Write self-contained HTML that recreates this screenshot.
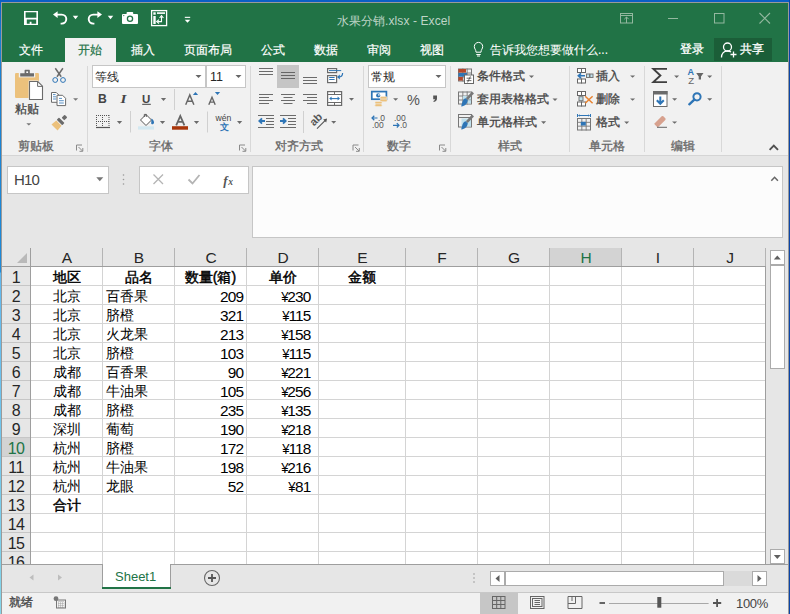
<!DOCTYPE html>
<html><head><meta charset="utf-8"><style>
html,body{margin:0;padding:0;width:790px;height:614px;overflow:hidden;position:relative;font-family:"Liberation Sans",sans-serif}
body>div{position:absolute}
.t{white-space:nowrap}
.s{-webkit-text-stroke:0.3px currentColor}
</style></head><body>
<div style="left:0px;top:0px;width:790px;height:614px;background:#e6e6e6"></div><div style="left:0px;top:0px;width:790px;height:62px;background:#217346"></div><div style="left:0px;top:62px;width:790px;height:93px;background:#f1f1f1"></div><div style="left:0px;top:155px;width:790px;height:1px;background:#d5d5d5"></div><div style="left:65px;top:38px;width:51px;height:24px;background:#f1f1f1"></div><div style="left:714px;top:38px;width:58px;height:23px;background:#1b5e38"></div><div class="t s" style="left:19px;top:44px;font-size:12px;line-height:12px;color:#fff;-webkit-text-stroke:0.2px #fff">文件</div><div class="t s" style="left:78px;top:44px;font-size:12px;line-height:12px;color:#217346;-webkit-text-stroke:0.2px #217346">开始</div><div class="t s" style="left:131px;top:44px;font-size:12px;line-height:12px;color:#fff;-webkit-text-stroke:0.2px #fff">插入</div><div class="t s" style="left:184px;top:44px;font-size:12px;line-height:12px;color:#fff;-webkit-text-stroke:0.2px #fff">页面布局</div><div class="t s" style="left:261px;top:44px;font-size:12px;line-height:12px;color:#fff;-webkit-text-stroke:0.2px #fff">公式</div><div class="t s" style="left:314px;top:44px;font-size:12px;line-height:12px;color:#fff;-webkit-text-stroke:0.2px #fff">数据</div><div class="t s" style="left:367px;top:44px;font-size:12px;line-height:12px;color:#fff;-webkit-text-stroke:0.2px #fff">审阅</div><div class="t s" style="left:420px;top:44px;font-size:12px;line-height:12px;color:#fff;-webkit-text-stroke:0.2px #fff">视图</div><div class="t s" style="left:337px;top:15px;font-size:12px;line-height:12px;color:#bfd5c7;-webkit-text-stroke:0">水果分销<span style='letter-spacing:0.1px'>.xlsx - Excel</span></div><div class="t s" style="left:490px;top:44px;font-size:12px;line-height:12px;color:#fff;-webkit-text-stroke:0.05px #fff">告诉我您想要做什么...</div><div class="t s" style="left:680px;top:43px;font-size:12px;line-height:12px;color:#fff;">登录</div><div class="t s" style="left:740px;top:43px;font-size:12px;line-height:12px;color:#fff;">共享</div><div class="t s" style="left:15px;top:103px;font-size:12px;line-height:12px;color:#444;">粘贴</div><div class="t s" style="left:18px;top:140px;font-size:12px;line-height:12px;color:#666;">剪贴板</div><div class="t s" style="left:149px;top:140px;font-size:12px;line-height:12px;color:#666;">字体</div><div class="t s" style="left:275px;top:140px;font-size:12px;line-height:12px;color:#666;">对齐方式</div><div class="t s" style="left:387px;top:140px;font-size:12px;line-height:12px;color:#666;">数字</div><div class="t s" style="left:498px;top:140px;font-size:12px;line-height:12px;color:#666;">样式</div><div class="t s" style="left:589px;top:140px;font-size:12px;line-height:12px;color:#666;">单元格</div><div class="t s" style="left:671px;top:140px;font-size:12px;line-height:12px;color:#666;">编辑</div><div style="left:92px;top:65px;width:114px;height:23px;background:#fff;border:1px solid #c6c6c6;box-sizing:border-box"></div><div style="left:206px;top:65px;width:40px;height:23px;background:#fff;border:1px solid #c6c6c6;box-sizing:border-box"></div><div class="t s" style="left:95px;top:71px;font-size:12px;line-height:12px;color:#262626;-webkit-text-stroke:0">等线</div><div class="t" style="left:210px;top:71px;font-size:12.5px;line-height:12.5px;color:#262626;">11</div><div style="left:368px;top:65px;width:78px;height:23px;background:#fff;border:1px solid #c6c6c6;box-sizing:border-box"></div><div class="t s" style="left:371px;top:71px;font-size:12px;line-height:12px;color:#262626;-webkit-text-stroke:0">常规</div><div style="left:277px;top:65px;width:22px;height:23px;background:#c5c5c5"></div><div class="t s" style="left:477px;top:70px;font-size:12px;line-height:12px;color:#444;">条件格式</div><div class="t s" style="left:477px;top:93px;font-size:12px;line-height:12px;color:#444;">套用表格格式</div><div class="t s" style="left:477px;top:116px;font-size:12px;line-height:12px;color:#444;">单元格样式</div><div class="t s" style="left:596px;top:70px;font-size:12px;line-height:12px;color:#444;">插入</div><div class="t s" style="left:596px;top:93px;font-size:12px;line-height:12px;color:#444;">删除</div><div class="t s" style="left:596px;top:116px;font-size:12px;line-height:12px;color:#444;">格式</div><div style="left:7px;top:166px;width:102px;height:28px;background:#fff;border:1px solid #c6c6c6;box-sizing:border-box"></div><div style="left:139px;top:166px;width:110px;height:28px;background:#fff;border:1px solid #c6c6c6;box-sizing:border-box"></div><div style="left:252px;top:166px;width:531px;height:72px;background:#fcfcfc;border:1px solid #c6c6c6;box-sizing:border-box"></div><div class="t" style="left:14px;top:172px;font-size:15px;line-height:15px;color:#444;letter-spacing:-0.8px">H10</div><div style="left:2px;top:248px;width:764px;height:18px;background:#e6e6e6"></div><div style="left:550px;top:248px;width:71px;height:18px;background:#d3d3d3"></div><div style="left:2px;top:437px;width:28px;height:19px;background:#d3d3d3"></div><div style="left:31px;top:267px;width:735px;height:297px;background:#fff"></div><div class="t" style="left:-83.0px;width:300px;text-align:center;top:250.2px;font-size:15.5px;line-height:15.5px;color:#262626;">A</div><div class="t" style="left:-11.0px;width:300px;text-align:center;top:250.2px;font-size:15.5px;line-height:15.5px;color:#262626;">B</div><div class="t" style="left:61.0px;width:300px;text-align:center;top:250.2px;font-size:15.5px;line-height:15.5px;color:#262626;">C</div><div class="t" style="left:133.0px;width:300px;text-align:center;top:250.2px;font-size:15.5px;line-height:15.5px;color:#262626;">D</div><div class="t" style="left:212.5px;width:300px;text-align:center;top:250.2px;font-size:15.5px;line-height:15.5px;color:#262626;">E</div><div class="t" style="left:292.0px;width:300px;text-align:center;top:250.2px;font-size:15.5px;line-height:15.5px;color:#262626;">F</div><div class="t" style="left:364.0px;width:300px;text-align:center;top:250.2px;font-size:15.5px;line-height:15.5px;color:#262626;">G</div><div class="t" style="left:436.0px;width:300px;text-align:center;top:250.2px;font-size:15.5px;line-height:15.5px;color:#217346;">H</div><div class="t" style="left:508.0px;width:300px;text-align:center;top:250.2px;font-size:15.5px;line-height:15.5px;color:#262626;">I</div><div class="t" style="left:580.0px;width:300px;text-align:center;top:250.2px;font-size:15.5px;line-height:15.5px;color:#262626;">J</div><div class="t" style="left:-134px;width:300px;text-align:center;top:269.6px;font-size:16px;line-height:16px;color:#262626;letter-spacing:-0.6px">1</div><div class="t" style="left:-134px;width:300px;text-align:center;top:288.6px;font-size:16px;line-height:16px;color:#262626;letter-spacing:-0.6px">2</div><div class="t" style="left:-134px;width:300px;text-align:center;top:307.6px;font-size:16px;line-height:16px;color:#262626;letter-spacing:-0.6px">3</div><div class="t" style="left:-134px;width:300px;text-align:center;top:326.6px;font-size:16px;line-height:16px;color:#262626;letter-spacing:-0.6px">4</div><div class="t" style="left:-134px;width:300px;text-align:center;top:345.6px;font-size:16px;line-height:16px;color:#262626;letter-spacing:-0.6px">5</div><div class="t" style="left:-134px;width:300px;text-align:center;top:364.6px;font-size:16px;line-height:16px;color:#262626;letter-spacing:-0.6px">6</div><div class="t" style="left:-134px;width:300px;text-align:center;top:383.6px;font-size:16px;line-height:16px;color:#262626;letter-spacing:-0.6px">7</div><div class="t" style="left:-134px;width:300px;text-align:center;top:402.6px;font-size:16px;line-height:16px;color:#262626;letter-spacing:-0.6px">8</div><div class="t" style="left:-134px;width:300px;text-align:center;top:421.6px;font-size:16px;line-height:16px;color:#262626;letter-spacing:-0.6px">9</div><div class="t" style="left:-134px;width:300px;text-align:center;top:440.6px;font-size:16px;line-height:16px;color:#217346;letter-spacing:-0.6px">10</div><div class="t" style="left:-134px;width:300px;text-align:center;top:459.6px;font-size:16px;line-height:16px;color:#262626;letter-spacing:-0.6px">11</div><div class="t" style="left:-134px;width:300px;text-align:center;top:478.6px;font-size:16px;line-height:16px;color:#262626;letter-spacing:-0.6px">12</div><div class="t" style="left:-134px;width:300px;text-align:center;top:497.6px;font-size:16px;line-height:16px;color:#262626;letter-spacing:-0.6px">13</div><div class="t" style="left:-134px;width:300px;text-align:center;top:516.6px;font-size:16px;line-height:16px;color:#262626;letter-spacing:-0.6px">14</div><div class="t" style="left:-134px;width:300px;text-align:center;top:535.6px;font-size:16px;line-height:16px;color:#262626;letter-spacing:-0.6px">15</div><div class="t" style="left:-134px;width:300px;text-align:center;top:554.6px;font-size:16px;line-height:16px;color:#262626;letter-spacing:-0.6px">16</div><div class="t" style="left:-83.5px;width:300px;text-align:center;top:269.5px;font-size:14px;line-height:14px;color:#000;-webkit-text-stroke:0.45px #000">地区</div><div class="t" style="left:-11.5px;width:300px;text-align:center;top:269.5px;font-size:14px;line-height:14px;color:#000;-webkit-text-stroke:0.45px #000">品名</div><div class="t" style="left:60.5px;width:300px;text-align:center;top:269.5px;font-size:14px;line-height:14px;color:#000;-webkit-text-stroke:0.45px #000">数量(箱)</div><div class="t" style="left:132.5px;width:300px;text-align:center;top:269.5px;font-size:14px;line-height:14px;color:#000;-webkit-text-stroke:0.45px #000">单价</div><div class="t" style="left:212.0px;width:300px;text-align:center;top:269.5px;font-size:14px;line-height:14px;color:#000;-webkit-text-stroke:0.45px #000">金额</div><div class="t" style="left:-83.5px;width:300px;text-align:center;top:288.5px;font-size:14px;line-height:14px;color:#000;">北京</div><div class="t" style="left:106px;top:288.5px;font-size:14px;line-height:14px;color:#000;">百香果</div><div class="t" style="left:-56.69999999999999px;width:300px;text-align:right;top:288.6px;font-size:15.4px;line-height:15.4px;color:#000;letter-spacing:-0.75px">209</div><div class="t" style="left:10.699999999999989px;width:300px;text-align:right;top:288.6px;font-size:15.4px;line-height:15.4px;color:#000;letter-spacing:-0.75px"><span style='display:inline-block;transform:scaleX(0.85);transform-origin:right;margin-right:-0.2px'>¥</span>230</div><div class="t" style="left:-83.5px;width:300px;text-align:center;top:307.5px;font-size:14px;line-height:14px;color:#000;">北京</div><div class="t" style="left:106px;top:307.5px;font-size:14px;line-height:14px;color:#000;">脐橙</div><div class="t" style="left:-56.69999999999999px;width:300px;text-align:right;top:307.6px;font-size:15.4px;line-height:15.4px;color:#000;letter-spacing:-0.75px">321</div><div class="t" style="left:10.699999999999989px;width:300px;text-align:right;top:307.6px;font-size:15.4px;line-height:15.4px;color:#000;letter-spacing:-0.75px"><span style='display:inline-block;transform:scaleX(0.85);transform-origin:right;margin-right:-0.2px'>¥</span>115</div><div class="t" style="left:-83.5px;width:300px;text-align:center;top:326.5px;font-size:14px;line-height:14px;color:#000;">北京</div><div class="t" style="left:106px;top:326.5px;font-size:14px;line-height:14px;color:#000;">火龙果</div><div class="t" style="left:-56.69999999999999px;width:300px;text-align:right;top:326.6px;font-size:15.4px;line-height:15.4px;color:#000;letter-spacing:-0.75px">213</div><div class="t" style="left:10.699999999999989px;width:300px;text-align:right;top:326.6px;font-size:15.4px;line-height:15.4px;color:#000;letter-spacing:-0.75px"><span style='display:inline-block;transform:scaleX(0.85);transform-origin:right;margin-right:-0.2px'>¥</span>158</div><div class="t" style="left:-83.5px;width:300px;text-align:center;top:345.5px;font-size:14px;line-height:14px;color:#000;">北京</div><div class="t" style="left:106px;top:345.5px;font-size:14px;line-height:14px;color:#000;">脐橙</div><div class="t" style="left:-56.69999999999999px;width:300px;text-align:right;top:345.6px;font-size:15.4px;line-height:15.4px;color:#000;letter-spacing:-0.75px">103</div><div class="t" style="left:10.699999999999989px;width:300px;text-align:right;top:345.6px;font-size:15.4px;line-height:15.4px;color:#000;letter-spacing:-0.75px"><span style='display:inline-block;transform:scaleX(0.85);transform-origin:right;margin-right:-0.2px'>¥</span>115</div><div class="t" style="left:-83.5px;width:300px;text-align:center;top:364.5px;font-size:14px;line-height:14px;color:#000;">成都</div><div class="t" style="left:106px;top:364.5px;font-size:14px;line-height:14px;color:#000;">百香果</div><div class="t" style="left:-56.69999999999999px;width:300px;text-align:right;top:364.6px;font-size:15.4px;line-height:15.4px;color:#000;letter-spacing:-0.75px">90</div><div class="t" style="left:10.699999999999989px;width:300px;text-align:right;top:364.6px;font-size:15.4px;line-height:15.4px;color:#000;letter-spacing:-0.75px"><span style='display:inline-block;transform:scaleX(0.85);transform-origin:right;margin-right:-0.2px'>¥</span>221</div><div class="t" style="left:-83.5px;width:300px;text-align:center;top:383.5px;font-size:14px;line-height:14px;color:#000;">成都</div><div class="t" style="left:106px;top:383.5px;font-size:14px;line-height:14px;color:#000;">牛油果</div><div class="t" style="left:-56.69999999999999px;width:300px;text-align:right;top:383.6px;font-size:15.4px;line-height:15.4px;color:#000;letter-spacing:-0.75px">105</div><div class="t" style="left:10.699999999999989px;width:300px;text-align:right;top:383.6px;font-size:15.4px;line-height:15.4px;color:#000;letter-spacing:-0.75px"><span style='display:inline-block;transform:scaleX(0.85);transform-origin:right;margin-right:-0.2px'>¥</span>256</div><div class="t" style="left:-83.5px;width:300px;text-align:center;top:402.5px;font-size:14px;line-height:14px;color:#000;">成都</div><div class="t" style="left:106px;top:402.5px;font-size:14px;line-height:14px;color:#000;">脐橙</div><div class="t" style="left:-56.69999999999999px;width:300px;text-align:right;top:402.6px;font-size:15.4px;line-height:15.4px;color:#000;letter-spacing:-0.75px">235</div><div class="t" style="left:10.699999999999989px;width:300px;text-align:right;top:402.6px;font-size:15.4px;line-height:15.4px;color:#000;letter-spacing:-0.75px"><span style='display:inline-block;transform:scaleX(0.85);transform-origin:right;margin-right:-0.2px'>¥</span>135</div><div class="t" style="left:-83.5px;width:300px;text-align:center;top:421.5px;font-size:14px;line-height:14px;color:#000;">深圳</div><div class="t" style="left:106px;top:421.5px;font-size:14px;line-height:14px;color:#000;">葡萄</div><div class="t" style="left:-56.69999999999999px;width:300px;text-align:right;top:421.6px;font-size:15.4px;line-height:15.4px;color:#000;letter-spacing:-0.75px">190</div><div class="t" style="left:10.699999999999989px;width:300px;text-align:right;top:421.6px;font-size:15.4px;line-height:15.4px;color:#000;letter-spacing:-0.75px"><span style='display:inline-block;transform:scaleX(0.85);transform-origin:right;margin-right:-0.2px'>¥</span>218</div><div class="t" style="left:-83.5px;width:300px;text-align:center;top:440.5px;font-size:14px;line-height:14px;color:#000;">杭州</div><div class="t" style="left:106px;top:440.5px;font-size:14px;line-height:14px;color:#000;">脐橙</div><div class="t" style="left:-56.69999999999999px;width:300px;text-align:right;top:440.6px;font-size:15.4px;line-height:15.4px;color:#000;letter-spacing:-0.75px">172</div><div class="t" style="left:10.699999999999989px;width:300px;text-align:right;top:440.6px;font-size:15.4px;line-height:15.4px;color:#000;letter-spacing:-0.75px"><span style='display:inline-block;transform:scaleX(0.85);transform-origin:right;margin-right:-0.2px'>¥</span>118</div><div class="t" style="left:-83.5px;width:300px;text-align:center;top:459.5px;font-size:14px;line-height:14px;color:#000;">杭州</div><div class="t" style="left:106px;top:459.5px;font-size:14px;line-height:14px;color:#000;">牛油果</div><div class="t" style="left:-56.69999999999999px;width:300px;text-align:right;top:459.6px;font-size:15.4px;line-height:15.4px;color:#000;letter-spacing:-0.75px">198</div><div class="t" style="left:10.699999999999989px;width:300px;text-align:right;top:459.6px;font-size:15.4px;line-height:15.4px;color:#000;letter-spacing:-0.75px"><span style='display:inline-block;transform:scaleX(0.85);transform-origin:right;margin-right:-0.2px'>¥</span>216</div><div class="t" style="left:-83.5px;width:300px;text-align:center;top:478.5px;font-size:14px;line-height:14px;color:#000;">杭州</div><div class="t" style="left:106px;top:478.5px;font-size:14px;line-height:14px;color:#000;">龙眼</div><div class="t" style="left:-56.69999999999999px;width:300px;text-align:right;top:478.6px;font-size:15.4px;line-height:15.4px;color:#000;letter-spacing:-0.75px">52</div><div class="t" style="left:10.699999999999989px;width:300px;text-align:right;top:478.6px;font-size:15.4px;line-height:15.4px;color:#000;letter-spacing:-0.75px"><span style='display:inline-block;transform:scaleX(0.85);transform-origin:right;margin-right:-0.2px'>¥</span>81</div><div class="t" style="left:-83.5px;width:300px;text-align:center;top:497.5px;font-size:14px;line-height:14px;color:#000;-webkit-text-stroke:0.45px #000">合计</div><div style="left:766px;top:248px;width:21px;height:316px;background:#e6e6e6"></div><div style="left:770px;top:250px;width:15px;height:15px;background:#fff;border:1px solid #ababab;box-sizing:border-box"></div><div style="left:770px;top:265px;width:15px;height:104px;background:#fff;border:1px solid #ababab;box-sizing:border-box"></div><div style="left:770px;top:549px;width:15px;height:15px;background:#fff;border:1px solid #ababab;box-sizing:border-box"></div><div style="left:2px;top:564px;width:786px;height:29px;background:#e6e6e6;border-top:1px solid #9e9e9e;border-bottom:1px solid #c8c8c8;box-sizing:border-box"></div><div style="left:102px;top:564px;width:69px;height:25px;background:#fff;border:1px solid #9e9e9e;border-top:none;box-sizing:border-box"></div><div style="left:102px;top:587px;width:69px;height:2px;background:#217346"></div><div class="t" style="left:115px;top:570px;font-size:13px;line-height:13px;color:#217346;">Sheet1</div><div style="left:490px;top:571px;width:277px;height:15px;background:#dadada"></div><div style="left:490px;top:571px;width:15px;height:15px;background:#fff;border:1px solid #ababab;box-sizing:border-box"></div><div style="left:505px;top:571px;width:219px;height:15px;background:#fff;border:1px solid #ababab;box-sizing:border-box"></div><div style="left:752px;top:571px;width:15px;height:15px;background:#fff;border:1px solid #ababab;box-sizing:border-box"></div><div style="left:2px;top:593px;width:786px;height:21px;background:#f1f1f1"></div><div style="left:480px;top:593px;width:38px;height:21px;background:#c6c6c6"></div><div class="t s" style="left:9px;top:596px;font-size:12px;line-height:12px;color:#444;">就绪</div><div class="t" style="left:736px;top:597px;font-size:13px;line-height:13px;color:#444;letter-spacing:-0.3px">100%</div><div style="left:1px;top:2px;width:788px;height:612px;border:1px solid #9a9a9a;border-bottom:none;box-sizing:border-box"></div><div style="left:0px;top:0px;width:790px;height:2px;background:#0b5fc5"></div><div style="left:0px;top:0px;width:1px;height:614px;background:linear-gradient(#0b5fc5 0px,#1a7fd0 40px,#1f8ad8 272px,#62b8ee 273px,#86d6ea 614px)"></div><div style="left:789px;top:0px;width:1px;height:614px;background:#0b45a8"></div><svg style="position:absolute;left:0;top:0" width="790" height="614"><line x1="31" y1="285.5" x2="766" y2="285.5" stroke="#d4d4d4"/><line x1="31" y1="304.5" x2="766" y2="304.5" stroke="#d4d4d4"/><line x1="31" y1="323.5" x2="766" y2="323.5" stroke="#d4d4d4"/><line x1="31" y1="342.5" x2="766" y2="342.5" stroke="#d4d4d4"/><line x1="31" y1="361.5" x2="766" y2="361.5" stroke="#d4d4d4"/><line x1="31" y1="380.5" x2="766" y2="380.5" stroke="#d4d4d4"/><line x1="31" y1="399.5" x2="766" y2="399.5" stroke="#d4d4d4"/><line x1="31" y1="418.5" x2="766" y2="418.5" stroke="#d4d4d4"/><line x1="31" y1="437.5" x2="766" y2="437.5" stroke="#d4d4d4"/><line x1="31" y1="456.5" x2="766" y2="456.5" stroke="#d4d4d4"/><line x1="31" y1="475.5" x2="766" y2="475.5" stroke="#d4d4d4"/><line x1="31" y1="494.5" x2="766" y2="494.5" stroke="#d4d4d4"/><line x1="31" y1="513.5" x2="766" y2="513.5" stroke="#d4d4d4"/><line x1="31" y1="532.5" x2="766" y2="532.5" stroke="#d4d4d4"/><line x1="31" y1="551.5" x2="766" y2="551.5" stroke="#d4d4d4"/><line x1="102.5" y1="267" x2="102.5" y2="564" stroke="#d4d4d4"/><line x1="174.5" y1="267" x2="174.5" y2="564" stroke="#d4d4d4"/><line x1="246.5" y1="267" x2="246.5" y2="564" stroke="#d4d4d4"/><line x1="318.5" y1="267" x2="318.5" y2="564" stroke="#d4d4d4"/><line x1="405.5" y1="267" x2="405.5" y2="564" stroke="#d4d4d4"/><line x1="477.5" y1="267" x2="477.5" y2="564" stroke="#d4d4d4"/><line x1="549.5" y1="267" x2="549.5" y2="564" stroke="#d4d4d4"/><line x1="621.5" y1="267" x2="621.5" y2="564" stroke="#d4d4d4"/><line x1="693.5" y1="267" x2="693.5" y2="564" stroke="#d4d4d4"/><line x1="2" y1="266.5" x2="766" y2="266.5" stroke="#9e9e9e"/><line x1="30.5" y1="248" x2="30.5" y2="564" stroke="#9e9e9e"/><line x1="765.5" y1="248" x2="765.5" y2="564" stroke="#9e9e9e"/><line x1="102.5" y1="248" x2="102.5" y2="266" stroke="#b4b4b4"/><line x1="174.5" y1="248" x2="174.5" y2="266" stroke="#b4b4b4"/><line x1="246.5" y1="248" x2="246.5" y2="266" stroke="#b4b4b4"/><line x1="318.5" y1="248" x2="318.5" y2="266" stroke="#b4b4b4"/><line x1="405.5" y1="248" x2="405.5" y2="266" stroke="#b4b4b4"/><line x1="477.5" y1="248" x2="477.5" y2="266" stroke="#b4b4b4"/><line x1="549.5" y1="248" x2="549.5" y2="266" stroke="#b4b4b4"/><line x1="621.5" y1="248" x2="621.5" y2="266" stroke="#b4b4b4"/><line x1="693.5" y1="248" x2="693.5" y2="266" stroke="#b4b4b4"/><line x1="765.5" y1="248" x2="765.5" y2="266" stroke="#b4b4b4"/><line x1="2" y1="285.5" x2="30" y2="285.5" stroke="#c6c6c6"/><line x1="2" y1="304.5" x2="30" y2="304.5" stroke="#c6c6c6"/><line x1="2" y1="323.5" x2="30" y2="323.5" stroke="#c6c6c6"/><line x1="2" y1="342.5" x2="30" y2="342.5" stroke="#c6c6c6"/><line x1="2" y1="361.5" x2="30" y2="361.5" stroke="#c6c6c6"/><line x1="2" y1="380.5" x2="30" y2="380.5" stroke="#c6c6c6"/><line x1="2" y1="399.5" x2="30" y2="399.5" stroke="#c6c6c6"/><line x1="2" y1="418.5" x2="30" y2="418.5" stroke="#c6c6c6"/><line x1="2" y1="437.5" x2="30" y2="437.5" stroke="#c6c6c6"/><line x1="2" y1="456.5" x2="30" y2="456.5" stroke="#c6c6c6"/><line x1="2" y1="475.5" x2="30" y2="475.5" stroke="#c6c6c6"/><line x1="2" y1="494.5" x2="30" y2="494.5" stroke="#c6c6c6"/><line x1="2" y1="513.5" x2="30" y2="513.5" stroke="#c6c6c6"/><line x1="2" y1="532.5" x2="30" y2="532.5" stroke="#c6c6c6"/><line x1="2" y1="551.5" x2="30" y2="551.5" stroke="#c6c6c6"/><path d="M17 263H27V253z" fill="#b9b9b9"/><path fill="#fff" fill-rule="evenodd" d="M24 11h14v14H24z M25.6 12.3h10.8v5.4H25.6z M26.8 19.5h9.4v4.2h-4.7v-1.9h-1.8v1.9H26.8z"/><path d="M56 14.6H61.8A4.5 4.5 0 0 1 61.8 23.6H60.6" fill="none" stroke="#fff" stroke-width="1.9"/><path d="M53 14.6L57.6 11.2V18z" fill="#fff"/><path d="M72.75 15.75h5.5l-2.75 3.5z" fill="#fff"/><path d="M99 14.6H93.2A4.5 4.5 0 0 0 93.2 23.6H94.4" fill="none" stroke="#fff" stroke-width="1.9"/><path d="M102 14.6L97.4 11.2V18z" fill="#fff"/><path d="M107.75 15.75h5.5l-2.75 3.5z" fill="#fff"/><rect x="122" y="14" width="16" height="10" rx="1" fill="#fff"/><rect x="126.6" y="12" width="6.6" height="3" rx="0.8" fill="#fff"/><circle cx="130" cy="18.8" r="2.6" fill="none" stroke="#217346" stroke-width="1.3"/><circle cx="123.8" cy="15.6" r="0.6" fill="#217346"/><rect x="151.6" y="10.6" width="15" height="15" fill="none" stroke="#fff" stroke-width="1.3"/><rect x="153.3" y="12.3" width="2.4" height="2.4" fill="#fff"/><rect x="153.3" y="16" width="2.4" height="8" fill="#fff"/><rect x="157" y="12.3" width="8" height="1.6" fill="#fff"/><path d="M161.5 16.5V21.6H157.5" fill="none" stroke="#fff" stroke-width="1.1"/><path d="M159.6 18L161.5 15.6L163.4 18M159 19.7L156.7 21.6L159 23.5" fill="none" stroke="#fff" stroke-width="1.1"/><rect x="184.8" y="16.8" width="5.4" height="1.1" fill="#fff"/><path d="M184.75 19.7h5.5l-2.75 3z" fill="#fff"/><rect x="620.5" y="13.5" width="12" height="9.5" fill="none" stroke="#93b89f"/><path d="M620.5 15.5H632.5M626.5 17V23M624.3 19.2L626.5 17L628.7 19.2" fill="none" stroke="#93b89f"/><path d="M668 18.5H678" stroke="#93b89f"/><rect x="714.5" y="13.5" width="9.5" height="9.5" fill="none" stroke="#93b89f"/><path d="M759.5 13L770 23.5M770 13L759.5 23.5" stroke="#93b89f" stroke-width="1.1"/><path d="M476 52.2C476 49.5 474.3 48.8 474.3 46.6A4.2 4.2 0 0 1 482.7 46.6C482.7 48.8 481 49.5 481 52.2Z" fill="none" stroke="#fff" stroke-width="1"/><path d="M476.3 54.5H480.7M477 56H480" stroke="#fff" stroke-width="1"/><circle cx="727.5" cy="47" r="4" fill="none" stroke="#fff" stroke-width="1.3"/><path d="M721.5 57.5C721.5 53.5 724 51 727.5 51C729 51 730.2 51.4 731 52" fill="none" stroke="#fff" stroke-width="1.3"/><path d="M733.5 51.5V57.5M730.5 54.5H736.5" stroke="#fff" stroke-width="1.3"/><rect x="15" y="73" width="24" height="25" rx="1.2" fill="#ecc17c"/><path d="M18.8 72.3H35.2V77.4H18.8z" fill="#f1f1f1"/><path fill="#6b6b6b" d="M24.6 70.3Q24.6 69.8 25.1 69.8H29.3Q29.8 69.8 29.8 70.3V73.2H34V76.6H20.2V73.2H24.6z"/><rect x="26.3" y="71.4" width="1.8" height="1.6" fill="#fff"/><path d="M28.6 80.6h9.5l5.4 5.4v15h-14.9z" fill="#f1f1f1"/><path d="M29.5 81.5h8.3l4.7 4.7v13.3h-13z" fill="#fff" stroke="#6b6b6b" stroke-width="1.1"/><path d="M37.6 81.8v4.6h4.6" fill="none" stroke="#6b6b6b" stroke-width="1"/><path d="M26.3 123.2h5l-2.5 2.4z" fill="#777"/><path d="M55.3 68.3L61.2 76.8M62.9 68.3L57 76.8" stroke="#6b6b6b" stroke-width="1.5"/><circle cx="55.2" cy="80" r="2.4" fill="none" stroke="#2e75b6" stroke-width="1"/><circle cx="63" cy="80" r="2.4" fill="none" stroke="#2e75b6" stroke-width="1"/><path d="M51.5 92.5h4.8l2.6 2.6v7.2h-7.4z" fill="#fff" stroke="#6b6b6b" stroke-width="1"/><path d="M53 94.6h2.6M53 96.8h3.2M53 99h3.2" stroke="#2e75b6" stroke-width="0.8"/><path d="M57 95.3h5.6l3 3v7.3h-8.6z" fill="#fff" stroke="#6b6b6b" stroke-width="1"/><path d="M59 98.4h3M59 100.7h4.8M59 103h4.8" stroke="#2e75b6" stroke-width="0.8"/><path d="M73.1 98.2h5l-2.5 2.6z" fill="#777"/><g transform="translate(60.6 121.4) rotate(45)"><rect x="-1.9" y="-7.6" width="3.8" height="4.3" rx="0.8" fill="#6b6b6b"/><rect x="-3.9" y="-1.6" width="7.8" height="3.2" rx="0.7" fill="#6b6b6b"/><path d="M-3.7 2.4H3.7L4.3 8.6H-4.3z" fill="#ecc17c"/></g><path d="M76.5 150.5V145.0H82" fill="none" stroke="#8a8a8a" stroke-width="1"/><path d="M78.5 147.0L82.5 151.0M82.8 148.0V151.3H79.5" fill="none" stroke="#8a8a8a" stroke-width="1"/><path d="M239.5 150.5V145.0H245" fill="none" stroke="#8a8a8a" stroke-width="1"/><path d="M241.5 147.0L245.5 151.0M245.8 148.0V151.3H242.5" fill="none" stroke="#8a8a8a" stroke-width="1"/><path d="M353.0 150.5V145.0H358.5" fill="none" stroke="#8a8a8a" stroke-width="1"/><path d="M355.0 147.0L359.0 151.0M359.3 148.0V151.3H356.0" fill="none" stroke="#8a8a8a" stroke-width="1"/><path d="M439.5 150.5V145.0H445" fill="none" stroke="#8a8a8a" stroke-width="1"/><path d="M441.5 147.0L445.5 151.0M445.8 148.0V151.3H442.5" fill="none" stroke="#8a8a8a" stroke-width="1"/><path d="M87.5 66V152" stroke="#d8d8d8" stroke-width="1"/><path d="M250.5 66V152" stroke="#d8d8d8" stroke-width="1"/><path d="M363.5 66V152" stroke="#d8d8d8" stroke-width="1"/><path d="M450.5 66V152" stroke="#d8d8d8" stroke-width="1"/><path d="M569.5 66V152" stroke="#d8d8d8" stroke-width="1"/><path d="M644.5 66V152" stroke="#d8d8d8" stroke-width="1"/><path d="M721.5 66V152" stroke="#d8d8d8" stroke-width="1"/><path d="M195.5 75.0h6l-3.0 3z" fill="#666"/><path d="M235.5 75.0h6l-3.0 3z" fill="#666"/><path d="M160.9 98.0h5.2l-2.6 3z" fill="#6b6b6b"/><path d="M116.9 121.0h5.2l-2.6 3z" fill="#6b6b6b"/><path d="M159.9 121.0h5.2l-2.6 3z" fill="#6b6b6b"/><path d="M193.9 121.0h5.2l-2.6 3z" fill="#6b6b6b"/><path d="M237.0 121.0h5.2l-2.6 3z" fill="#6b6b6b"/><path d="M174.5 89V110M130.5 111V132.5M207.5 111.5V132.5" stroke="#d0d0d0"/><path d="M96.5 115V127M102.5 115V127M109 115V127" stroke="#555" stroke-width="1" stroke-dasharray="1 1"/><path d="M96 115.5H110M96 121.5H110" stroke="#555" stroke-width="1" stroke-dasharray="1 1"/><path d="M96 127.5H110" stroke="#555" stroke-width="1.2"/><rect x="138" y="126.3" width="16" height="3.3" fill="#d3e8f1"/><path d="M146 114.5L151.5 120L146 125.5L140.5 120z" fill="#fff" stroke="#555" stroke-width="1"/><path d="M144.3 117V114.4H146.3V117" fill="none" stroke="#555" stroke-width="0.9"/><path d="M151.5 118.5C153 119.5 154 121 154 122.5C154 123.5 153.2 124.3 152.3 124.3C151.8 124.3 151.2 124 151.2 123.3z" fill="#2e75b6"/><rect x="172" y="126.2" width="16" height="3.5" fill="#a9360b"/><path d="M176.2 125.4L180.3 116L184.4 125.4M177.8 121.9H182.8" fill="none" stroke="#666" stroke-width="1.8"/><path d="M185.7 104.8L189.8 94.9L193.9 104.8M187.3 101.2H192.3" fill="none" stroke="#666" stroke-width="1.45"/><path d="M192.9 95L195.5 92L198.1 95z" fill="#2e75b6"/><path d="M208.8 104.8L212 97.3L215.2 104.8M210 102.1H214" fill="none" stroke="#666" stroke-width="1.4"/><path d="M214.9 92H220.1L217.5 95z" fill="#2e75b6"/><path d="M259 68.5H273" stroke="#6b6b6b" stroke-width="1"/><path d="M259 71.5H273" stroke="#6b6b6b" stroke-width="1"/><path d="M259 74.5H273" stroke="#6b6b6b" stroke-width="1"/><path d="M281 72.5H295" stroke="#666" stroke-width="1"/><path d="M281 75.5H295" stroke="#666" stroke-width="1"/><path d="M281 78.5H295" stroke="#666" stroke-width="1"/><path d="M303 77.5H317" stroke="#6b6b6b" stroke-width="1"/><path d="M303 80.5H317" stroke="#6b6b6b" stroke-width="1"/><path d="M303 83.5H317" stroke="#6b6b6b" stroke-width="1"/><path d="M259 94.5H273" stroke="#6b6b6b" stroke-width="1"/><path d="M281 94.5H295" stroke="#6b6b6b" stroke-width="1"/><path d="M303 94.5H317" stroke="#6b6b6b" stroke-width="1"/><path d="M259 97.5H269" stroke="#6b6b6b" stroke-width="1"/><path d="M283.5 97.5H292.5" stroke="#6b6b6b" stroke-width="1"/><path d="M307 97.5H317" stroke="#6b6b6b" stroke-width="1"/><path d="M259 100.5H273" stroke="#6b6b6b" stroke-width="1"/><path d="M281 100.5H295" stroke="#6b6b6b" stroke-width="1"/><path d="M303 100.5H317" stroke="#6b6b6b" stroke-width="1"/><path d="M259 103.5H269" stroke="#6b6b6b" stroke-width="1"/><path d="M283.5 103.5H292.5" stroke="#6b6b6b" stroke-width="1"/><path d="M307 103.5H317" stroke="#6b6b6b" stroke-width="1"/><rect x="327.6" y="68.6" width="9" height="4" fill="#fff" stroke="#6b6b6b" stroke-width="1.2"/><rect x="327.6" y="75.6" width="9" height="7" fill="#fff" stroke="#6b6b6b" stroke-width="1.2"/><path d="M329 70.6H341.2M329.2 77.5H334.6M329.2 79.5H334.6" stroke="#2e75b6" stroke-width="1"/><path d="M342.6 73C342.6 75.6 341 77 338.6 77" fill="none" stroke="#2e75b6" stroke-width="1.2"/><path d="M337 77L339.8 74.6V79.4z" fill="#2e75b6"/><rect x="327.6" y="91.6" width="14" height="13.8" fill="#fff" stroke="#6b6b6b" stroke-width="1.2"/><path d="M327.5 94.5H341.5M334.5 91.5V94.5M327.5 102.5H341.5M334.5 102.5V105.5" stroke="#6b6b6b" stroke-width="1"/><path d="M331 98.6H338.2" stroke="#2e75b6" stroke-width="1.1"/><path d="M329.2 98.6L331.6 96.6V100.6z M340 98.6L337.6 96.6V100.6z" fill="#2e75b6"/><path d="M349.0 98.10000000000001h5l-2.5 2.6z" fill="#6b6b6b"/><path d="M258 115.5H274" stroke="#6b6b6b" stroke-width="1"/><path d="M266 118.5H274" stroke="#6b6b6b" stroke-width="1"/><path d="M266 121.5H274" stroke="#6b6b6b" stroke-width="1"/><path d="M266 124.5H274" stroke="#6b6b6b" stroke-width="1"/><path d="M258 127.5H274" stroke="#6b6b6b" stroke-width="1"/><path d="M265 121H259.5M262 118.3L259.3 121L262 123.7" fill="none" stroke="#2e75b6" stroke-width="1.8"/><path d="M280 115.5H296" stroke="#6b6b6b" stroke-width="1"/><path d="M288 118.5H296" stroke="#6b6b6b" stroke-width="1"/><path d="M288 121.5H296" stroke="#6b6b6b" stroke-width="1"/><path d="M288 124.5H296" stroke="#6b6b6b" stroke-width="1"/><path d="M280 127.5H296" stroke="#6b6b6b" stroke-width="1"/><path d="M280 121H285.5M283 118.3L285.7 121L283 123.7" fill="none" stroke="#2e75b6" stroke-width="1.8"/><path d="M303.5 111V133" stroke="#d0d0d0"/><text x="0" y="0" font-family="Liberation Sans" font-size="11" font-weight="bold" fill="#555" transform="translate(314 126.5) rotate(-45)">ab</text><path d="M317 128.6L326.3 119.3" fill="none" stroke="#555" stroke-width="1.1"/><path d="M327 118.6L323.2 119.4L326.2 122.4z" fill="#555"/><path d="M331.2 121.10000000000001h5l-2.5 2.6z" fill="#6b6b6b"/><path d="M435.5 75.0h6l-3.0 3z" fill="#666"/><rect x="371.8" y="91.6" width="14.6" height="7.6" fill="#fff" stroke="#2e75b6" stroke-width="1.7"/><circle cx="378.2" cy="95.4" r="2.1" fill="#2e75b6"/><circle cx="378.9" cy="94.9" r="0.8" fill="#fff"/><rect x="380.0" y="96.60000000000001" width="7.2" height="2.6" rx="1.3" fill="#ecc17c" stroke="#f1f1f1" stroke-width="0.5"/><rect x="380.0" y="99.10000000000001" width="7.2" height="2.6" rx="1.3" fill="#ecc17c" stroke="#f1f1f1" stroke-width="0.5"/><rect x="374.9" y="101.4" width="7.2" height="2.6" rx="1.3" fill="#ecc17c" stroke="#f1f1f1" stroke-width="0.5"/><rect x="374.9" y="103.9" width="7.2" height="2.6" rx="1.3" fill="#ecc17c" stroke="#f1f1f1" stroke-width="0.5"/><path d="M393.1 98.2h5l-2.5 2.6z" fill="#6b6b6b"/><text x="407" y="104.8" font-family="Liberation Sans" font-size="14.5" fill="#555">%</text><path d="M433.2 95.6h3.8v2.8C437 100 436 101.4 433.8 102l-0.5-1c1-0.4 1.6-1 1.7-1.8h-1.8z" fill="#555"/><text x="378" y="120.6" font-family="Liberation Sans" font-size="8.5" fill="#555">.0</text><text x="372" y="128" font-family="Liberation Sans" font-size="8.5" fill="#555">.00</text><path d="M377.5 118H372M374.3 115.8L372 118L374.3 120.2" fill="none" stroke="#2e75b6" stroke-width="1.2"/><text x="394" y="120.6" font-family="Liberation Sans" font-size="8.5" fill="#555">.00</text><text x="400" y="128" font-family="Liberation Sans" font-size="8.5" fill="#555">.0</text><path d="M393 125.3H399M396.8 123.1L399 125.3L396.8 127.5" fill="none" stroke="#2e75b6" stroke-width="1.2"/><rect x="458.5" y="69.0" width="13" height="12" fill="none" stroke="#777" stroke-width="1"/><path d="M462.8333333333333 68.5 V81.5" stroke="#777" stroke-width="0.9"/><path d="M467.1666666666667 68.5 V81.5" stroke="#777" stroke-width="0.9"/><path d="M458 73.0 H472" stroke="#777" stroke-width="0.9"/><path d="M458 77.0 H472" stroke="#777" stroke-width="0.9"/><rect x="458.5" y="69" width="7.5" height="3.6" fill="#b5472a"/><rect x="458.5" y="73" width="8.5" height="3.6" fill="#2e75b6"/><rect x="458.5" y="77" width="4.3" height="3.6" fill="#b5472a"/><rect x="464.5" y="75" width="9" height="8.5" fill="#fff" stroke="#666" stroke-width="1"/><path d="M466.6 78.2H471.4M466.6 80.6H471.4M470.4 76.4L467.6 82.4" stroke="#444" stroke-width="0.8"/><path d="M529.0 75.5h5l-2.5 2.6z" fill="#6b6b6b"/><rect x="458.5" y="92.0" width="13" height="12" fill="none" stroke="#777" stroke-width="1"/><path d="M462.8333333333333 91.5 V104.5" stroke="#777" stroke-width="0.9"/><path d="M467.1666666666667 91.5 V104.5" stroke="#777" stroke-width="0.9"/><path d="M458 96.0 H472" stroke="#777" stroke-width="0.9"/><path d="M458 100.0 H472" stroke="#777" stroke-width="0.9"/><rect x="462.9" y="95.9" width="8.1" height="7.6" fill="#bfe0ec"/><path d="M467.2 95.5V103.5M462.5 99.8H471.5" stroke="#999" stroke-width="0.8"/><path d="M552.5 98.5h5l-2.5 2.6z" fill="#6b6b6b"/><rect x="458.5" y="114.5" width="13" height="12.5" fill="none" stroke="#777"/><path d="M458 117.5H472" stroke="#777"/><rect x="461.5" y="118.5" width="9.5" height="8" fill="#bfe0ec"/><path d="M541.1 121.3h5l-2.5 2.6z" fill="#6b6b6b"/><path d="M473 92.5L466.8 99.2" stroke="#787878" stroke-width="2.6"/><path d="M467.8 100.3L465.6 98.3C463.5 98.8 462.3 100.8 461.2 106.6C465.2 105.8 467.2 104.2 467.8 100.3z" fill="#2e75b6"/><path d="M473 115.5L466.8 122.2" stroke="#787878" stroke-width="2.6"/><path d="M467.8 123.3L465.6 121.3C463.5 121.8 462.3 123.8 461.2 129.6C465.2 128.8 467.2 127.2 467.8 123.3z" fill="#2e75b6"/><rect x="577.5" y="68.5" width="4" height="4" fill="#fff" stroke="#666" stroke-width="1"/><rect x="581.5" y="68.5" width="4" height="4" fill="#fff" stroke="#666" stroke-width="1"/><rect x="586.5" y="74.0" width="3" height="3.5" fill="#bfe0ec" stroke="#777" stroke-width="1"/><rect x="590.0" y="74.0" width="3" height="3.5" fill="#bfe0ec" stroke="#777" stroke-width="1"/><rect x="577.5" y="79.0" width="4" height="4" fill="#fff" stroke="#666" stroke-width="1"/><rect x="581.5" y="79.0" width="4" height="4" fill="#fff" stroke="#666" stroke-width="1"/><path d="M585 75.8H578.5M581 73.4L578.3 75.8L581 78.2" fill="none" stroke="#2e75b6" stroke-width="1.6"/><path d="M630.1 75.39999999999999h5l-2.5 2.4z" fill="#6b6b6b"/><rect x="577.5" y="91.5" width="4" height="4" fill="#fff" stroke="#666" stroke-width="1"/><rect x="581.5" y="91.5" width="4" height="4" fill="#fff" stroke="#666" stroke-width="1"/><rect x="579.0" y="96.7" width="4" height="4" fill="#bfe0ec" stroke="#777" stroke-width="1"/><rect x="577.5" y="102.0" width="4" height="4" fill="#fff" stroke="#666" stroke-width="1"/><rect x="581.5" y="102.0" width="4" height="4" fill="#fff" stroke="#666" stroke-width="1"/><path d="M585.2 96.3L592.6 103.2M592.6 96.3L585.2 103.2" stroke="#e8822f" stroke-width="1.5"/><path d="M630.1 98.39999999999999h5l-2.5 2.4z" fill="#6b6b6b"/><rect x="577.5" y="118.5" width="13" height="11.5" fill="none" stroke="#777" stroke-width="1"/><path d="M581.8333333333334 118 V130.5" stroke="#777" stroke-width="0.9"/><path d="M586.1666666666666 118 V130.5" stroke="#777" stroke-width="0.9"/><path d="M577 122.33333333333333 H591" stroke="#777" stroke-width="0.9"/><path d="M577 126.16666666666667 H591" stroke="#777" stroke-width="0.9"/><rect x="580.8" y="121.8" width="5" height="3.7" fill="#2e75b6"/><path d="M578.5 115.5H589.5M577.5 114V117M590.5 114V117" stroke="#2e75b6" stroke-width="1"/><path d="M578.3 115.5L579.8 114.3V116.7z M589.7 115.5L588.2 114.3V116.7z" fill="#2e75b6"/><path d="M624.2 121.6h5l-2.5 2.4z" fill="#6b6b6b"/><path d="M667 68.9H653.4L660.4 75.5L653.4 82.1H667" fill="none" stroke="#3f3f3f" stroke-width="1.9"/><path d="M674.1 75.6h5l-2.5 2.4z" fill="#6b6b6b"/><text x="687.6" y="74.8" font-family="Liberation Sans" font-weight="bold" font-size="9" fill="#2e75b6">A</text><text x="688.2" y="83.8" font-family="Liberation Sans" font-size="9.6" fill="#666">Z</text><path d="M696.2 73.1H703.5L701 76.5V79.6H698.7V76.5z" fill="#666"/><path d="M707.2 75.6h5l-2.5 2.4z" fill="#6b6b6b"/><rect x="653.5" y="91.5" width="13.5" height="15" fill="#fff" stroke="#6b6b6b" stroke-width="1"/><rect x="653" y="91" width="14.5" height="3.5" fill="#6b6b6b"/><path d="M660.3 96.5V103.5M656.8 100.3L660.3 103.8L663.8 100.3" fill="none" stroke="#2e75b6" stroke-width="2"/><path d="M672.1 98.3h5l-2.5 2.4z" fill="#6b6b6b"/><circle cx="697" cy="96.8" r="3.6" fill="none" stroke="#2e75b6" stroke-width="2"/><path d="M694.3 99.6L689.3 104.3" stroke="#2e75b6" stroke-width="2.4" stroke-linecap="round"/><path d="M707.2 98.3h5l-2.5 2.4z" fill="#6b6b6b"/><path d="M654.5 123.5L661.7 116.3Q662.5 115.5 663.3 116.3L665.3 118.3Q666.1 119.1 665.3 119.9L658.5 126.7Q657.7 127.5 656.9 126.7L654.5 124.3Q653.7 123.5 654.5 123.5z" fill="#d7a18e"/><path d="M657 127.3H667" stroke="#666" stroke-width="1"/><path d="M672.1 121.39999999999999h5l-2.5 2.4z" fill="#6b6b6b"/><path d="M769.6 149.8L773.8 145.6L778 149.8" fill="none" stroke="#505050" stroke-width="1.9"/><text x="98" y="102.8" font-family="Liberation Sans" font-weight="bold" font-size="12.2" fill="#444">B</text><text x="120.6" y="102.9" font-family="Liberation Serif" font-style="italic" font-weight="bold" font-size="13.5" fill="#444" transform="translate(120.6 102.9) scale(1.12 1) translate(-120.6 -102.9)">I</text><text x="142" y="102.8" font-family="Liberation Sans" font-weight="bold" font-size="11.5" fill="#444">U</text><rect x="142.2" y="103.8" width="8.6" height="1" fill="#444"/><text x="215.6" y="120.7" font-family="Liberation Sans" font-size="8.6" fill="#444">wén</text><text x="219.5" y="129.6" font-family="Liberation Sans" font-size="8.5" font-weight="bold" fill="#2e75b6">文</text><path d="M96.3 177.3h7l-3.5 4z" fill="#777"/><circle cx="123.5" cy="175" r="0.8" fill="#999"/><circle cx="123.5" cy="179.5" r="0.8" fill="#999"/><circle cx="123.5" cy="184" r="0.8" fill="#999"/><path d="M153.5 174.5L163 184M163 174.5L153.5 184" stroke="#b4b4b4" stroke-width="1.3"/><path d="M188.5 179.5L192.5 183.5L199.5 175" fill="none" stroke="#b4b4b4" stroke-width="1.8"/><text x="223.3" y="184.8" font-family="Liberation Serif" font-style="italic" font-weight="bold" font-size="13" fill="#555">f</text><text x="228.3" y="185.3" font-family="Liberation Serif" font-style="italic" font-weight="bold" font-size="9.5" fill="#555">x</text><path d="M771.3 180.8L774.6 177.3L777.9 180.8" fill="none" stroke="#666" stroke-width="1.5"/><path d="M773.8 259.5h7l-3.5 -4z" fill="#606060"/><path d="M773.8 555h7l-3.5 4z" fill="#606060"/><path d="M495.5 578.5l4-3.5v7z" fill="#606060"/><path d="M761.5 578.5l-4-3.5v7z" fill="#606060"/><circle cx="474" cy="574" r="0.8" fill="#999"/><circle cx="474" cy="578" r="0.8" fill="#999"/><circle cx="474" cy="582" r="0.8" fill="#999"/><path d="M33.5 574.5L29.5 577.5L33.5 580.5z" fill="#bdbdbd"/><path d="M58 574.5L62 577.5L58 580.5z" fill="#bdbdbd"/><circle cx="212" cy="578" r="7.5" fill="none" stroke="#666" stroke-width="1.1"/><path d="M208 578H216M212 574V582" stroke="#555" stroke-width="1.8"/><rect x="56.5" y="600" width="9" height="8" fill="none" stroke="#777"/><path d="M58 603H64.5M58 605H64.5M58 607H64.5M59 601V608M61 601V608M63 601V608" stroke="#888" stroke-width="0.7" stroke-dasharray="1 1"/><circle cx="56" cy="598.7" r="2.4" fill="#777"/><rect x="492.5" y="596.5" width="12.5" height="12" fill="none" stroke="#666"/><path d="M496.7 596.5V608.5M500.8 596.5V608.5M492.5 600.5H505M492.5 604.5H505" stroke="#666"/><rect x="530.5" y="596.5" width="13.5" height="12" fill="none" stroke="#666"/><rect x="532.5" y="598.5" width="9.5" height="8" fill="none" stroke="#666"/><path d="M534.5 600.5H540M534.5 602.5H540M534.5 604.5H540" stroke="#666"/><path d="M568 596.5H582V608.5H568z M568 603.5H575.5V596.5M572 596.5V601" fill="none" stroke="#666"/><path d="M599.5 603H605" stroke="#555" stroke-width="1.8"/><path d="M609 603.5H708.6" stroke="#a8a8a8"/><rect x="657.3" y="597" width="4" height="10.7" fill="#555"/><path d="M713 603H721.2M717.1 599V607" stroke="#555" stroke-width="1.8"/></svg>
</body></html>
